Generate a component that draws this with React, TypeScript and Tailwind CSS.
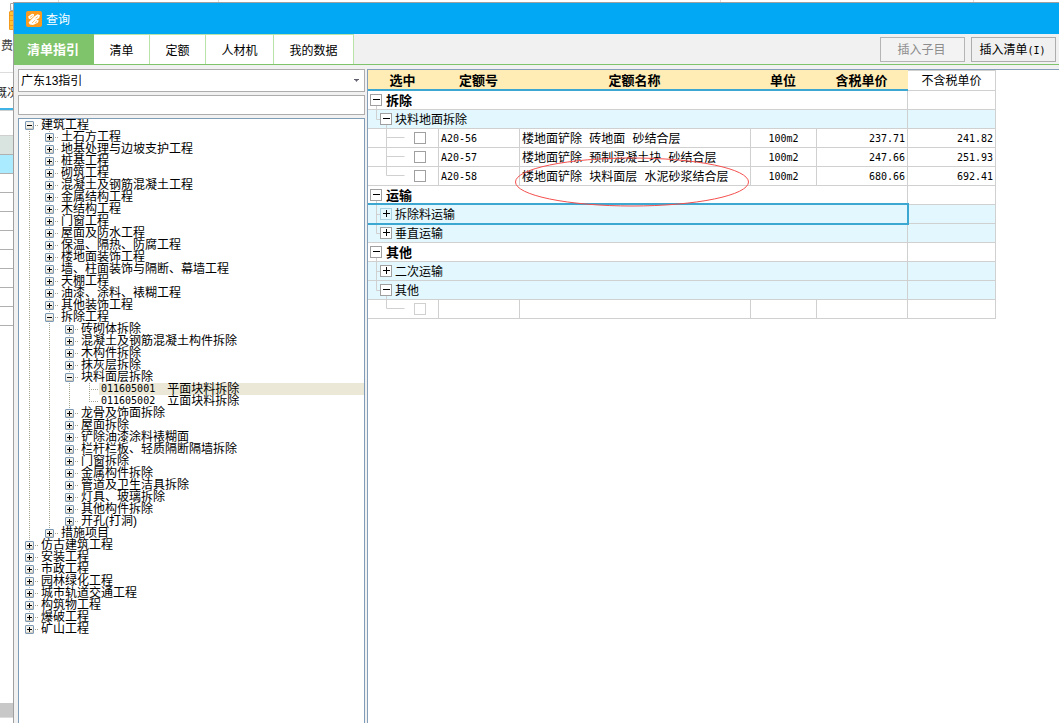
import React from 'react';

type TreeNode = { label: string; code?: string; open?: boolean; selected?: boolean; children?: TreeNode[] };

const leafs = (names: string[]): TreeNode[] => names.map((label) => ({ label, children: [] }));

const tree: TreeNode[] = [
  {
    label: '建筑工程',
    open: true,
    children: [
      ...leafs([
        '土石方工程',
        '地基处理与边坡支护工程',
        '桩基工程',
        '砌筑工程',
        '混凝土及钢筋混凝土工程',
        '金属结构工程',
        '木结构工程',
        '门窗工程',
        '屋面及防水工程',
        '保温、隔热、防腐工程',
        '楼地面装饰工程',
        '墙、柱面装饰与隔断、幕墙工程',
        '天棚工程',
        '油漆、涂料、裱糊工程',
        '其他装饰工程',
      ]),
      {
        label: '拆除工程',
        open: true,
        children: [
          ...leafs(['砖砌体拆除', '混凝土及钢筋混凝土构件拆除', '木构件拆除', '抹灰层拆除']),
          {
            label: '块料面层拆除',
            open: true,
            children: [
              { code: '011605001', label: '平面块料拆除', selected: true },
              { code: '011605002', label: '立面块料拆除' },
            ],
          },
          ...leafs([
            '龙骨及饰面拆除',
            '屋面拆除',
            '铲除油漆涂料裱糊面',
            '栏杆栏板、轻质隔断隔墙拆除',
            '门窗拆除',
            '金属构件拆除',
            '管道及卫生洁具拆除',
            '灯具、玻璃拆除',
            '其他构件拆除',
            '开孔(打洞)',
          ]),
        ],
      },
      ...leafs(['措施项目']),
    ],
  },
  ...leafs(['仿古建筑工程', '安装工程', '市政工程', '园林绿化工程', '城市轨道交通工程', '构筑物工程', '爆破工程', '矿山工程']),
];

const dots = { stroke: '#a5a391', strokeWidth: 1, strokeDasharray: '1 1' };

function TreeRow({ node, guides, first, last }: { node: TreeNode; guides: boolean[]; first: boolean; last: boolean }) {
  const top = first ? 6 : 0;
  return (
    <div className="flex h-3 items-stretch">
      {guides.map((on, i) => (
        <svg key={i} className="h-3 w-5 shrink-0" viewBox="0 0 20 12" aria-hidden="true">
          {on && <line x1="10.5" y1="0" x2="10.5" y2="12" {...dots} />}
        </svg>
      ))}
      {node.children ? (
        <button type="button" aria-label={(node.open ? '折叠' : '展开') + node.label} className="h-3 w-5 shrink-0">
          <svg className="block h-3 w-5" viewBox="0 0 20 12">
            <line x1="10.5" y1={top} x2="10.5" y2={last ? 6 : 12} {...dots} />
            <line x1="16" y1="6.5" x2="20" y2="6.5" {...dots} />
            <rect x="6.5" y="2.5" width="8" height="8" rx="0.5" fill="#f3f1ea" stroke="#7b99b5" />
            <path d="M7 9.5h7M13.5 7v3" stroke="#d2cdbf" fill="none" />
            <path d={node.open ? 'M8 6.5h5' : 'M8 6.5h5M10.5 4v5'} stroke="#000" fill="none" />
          </svg>
        </button>
      ) : (
        <svg className="h-3 w-5 shrink-0" viewBox="0 0 20 12" aria-hidden="true">
          <line x1="10.5" y1="0" x2="10.5" y2={last ? 7 : 12} {...dots} />
          <line x1="10" y1="6.5" x2="20" y2="6.5" {...dots} />
        </svg>
      )}
      <div className={'flex flex-1 items-center whitespace-nowrap pl-0.5 ' + (node.selected ? 'bg-[#ebe8d7]' : '')}>
        {node.code && <span className={'mr-3 ' + mono}>{node.code}</span>}
        <span>{node.label}</span>
      </div>
    </div>
  );
}

function TreeLevel({ nodes, guides }: { nodes: TreeNode[]; guides: boolean[] }) {
  return (
    <ul role={guides.length ? 'group' : 'tree'}>
      {nodes.map((node, i) => {
        const last = i === nodes.length - 1;
        return (
          <li key={node.label} role="treeitem" aria-selected={!!node.selected}>
            <TreeRow node={node} guides={guides} first={i === 0 && guides.length === 0} last={last} />
            {node.open && node.children && <TreeLevel nodes={node.children} guides={[...guides, !last]} />}
          </li>
        );
      })}
    </ul>
  );
}

type Row =
  | { kind: 'group'; label: string }
  | { kind: 'sub'; label: string; open: boolean; last: boolean; current?: boolean }
  | { kind: 'item'; code: string; name: string; unit: string; taxed: string; untaxed: string; last: boolean; disabled?: boolean };

const rows: Row[] = [
  { kind: 'group', label: '拆除' },
  { kind: 'sub', label: '块料地面拆除', open: true, last: true },
  { kind: 'item', code: 'A20-56', name: '楼地面铲除 砖地面 砂结合层', unit: '100m2', taxed: '237.71', untaxed: '241.82', last: false },
  { kind: 'item', code: 'A20-57', name: '楼地面铲除 预制混凝土块 砂结合层', unit: '100m2', taxed: '247.66', untaxed: '251.93', last: false },
  { kind: 'item', code: 'A20-58', name: '楼地面铲除 块料面层 水泥砂浆结合层', unit: '100m2', taxed: '680.66', untaxed: '692.41', last: true },
  { kind: 'group', label: '运输' },
  { kind: 'sub', label: '拆除料运输', open: false, last: false, current: true },
  { kind: 'sub', label: '垂直运输', open: false, last: true },
  { kind: 'group', label: '其他' },
  { kind: 'sub', label: '二次运输', open: false, last: false },
  { kind: 'sub', label: '其他', open: true, last: true },
  { kind: 'item', code: '', name: '', unit: '', taxed: '', untaxed: '', last: true, disabled: true },
];

const mono = "font-['DejaVu_Sans_Mono','Liberation_Mono',monospace] text-[10px] leading-3";
const cell = 'h-[19px] border-r border-b border-[#d0d0d0]';
const textCell = cell + ' px-0.5 pt-0.5 pb-0';

function GridRow({ row }: { row: Row }) {
  if (row.kind === 'group') {
    return (
      <tr>
        <td colSpan={5} className={cell + ' p-0'}>
          <div className="flex h-[18px] items-center">
            <button type="button" aria-label={'折叠' + row.label} className="h-[18px] w-[18px] shrink-0">
              <svg className="block h-[18px] w-[18px]" viewBox="0 0 18 18">
                <path d="M8.5 15v3" stroke="#d0d0d0" />
                <rect x="2.5" y="3.5" width="11" height="11" fill="#fff" stroke="#a0a0a0" />
                <path d="M5 8.5h7" stroke="#000" />
              </svg>
            </button>
            <span className="pt-0.5 text-[13px] font-bold">{row.label}</span>
          </div>
        </td>
        <td className={cell + ' p-0'} />
      </tr>
    );
  }
  if (row.kind === 'sub') {
    return (
      <tr className="bg-[#e2f7fe]">
        <td colSpan={5} className={cell + ' relative p-0'}>
          <div className="flex h-[18px] items-center">
            <button type="button" aria-label={(row.open ? '折叠' : '展开') + row.label} className="h-[18px] w-[27px] shrink-0">
              <svg className="block h-[18px] w-[27px]" viewBox="0 0 27 18" fill="none">
                <path d={row.last ? 'M8.5 0v9.5h4' : 'M8.5 0v18M8.5 9.5h4'} stroke="#d0d0d0" />
                {row.open && <path d="M18.5 15v3" stroke="#d0d0d0" />}
                <rect x="12.5" y="3.5" width="11" height="11" fill={row.current ? '#e2f7fe' : '#fff'} stroke={row.current ? '#a9d3e2' : '#a0a0a0'} />
                <path d={row.open ? 'M15 8.5h7' : 'M15 8.5h7M18.5 5v7'} stroke="#000" />
              </svg>
            </button>
            <span className="pt-0.5">{row.label}</span>
          </div>
          {row.current && (
            <div className="pointer-events-none absolute -top-0.5 -right-0.5 -bottom-0.5 left-0 z-10 border-2 border-l-0 border-[#3ca8d2]" />
          )}
        </td>
        <td className={cell + ' p-0'} />
      </tr>
    );
  }
  return (
    <tr>
      <td className={cell + ' p-0'}>
        <div className="flex h-[18px] items-center">
          <svg className="h-[18px] w-[46px] shrink-0" viewBox="0 0 46 18" fill="none" aria-hidden="true">
            <path d={row.last ? 'M18.5 0v8.5h18' : 'M18.5 0v18M18.5 8.5h18'} stroke="#d0d0d0" />
          </svg>
          <input
            type="checkbox"
            aria-label={'选中 ' + row.code}
            disabled={row.disabled}
            className="block h-3 w-3 appearance-none border border-[#a0a0a0] bg-white checked:bg-[#3ca8d2] disabled:border-[#d0d0d0]"
          />
        </div>
      </td>
      <td className={textCell + ' ' + mono}>{row.code}</td>
      <td className={cell + " px-0.5 pt-1 pb-0 font-['Liberation_Mono','Noto_Sans_CJK_SC',monospace] whitespace-nowrap"}>{row.name}</td>
      <td className={textCell + ' text-center ' + mono}>{row.unit}</td>
      <td className={textCell + ' text-right ' + mono}>{row.taxed}</td>
      <td className={textCell + ' text-right ' + mono}>{row.untaxed}</td>
    </tr>
  );
}

function AppLogo() {
  return (
    <svg className="h-4 w-4" viewBox="0 0 16 16" fill="none" aria-hidden="true">
      <rect width="16" height="16" rx="2" fill="#fb9a1c" />
      <path d="M2.200 5.400 6 2.800 8.200 3.200 7.600 5.400 4.400 8.200 2.600 7.600Z" fill="#fff" />
      <path d="M8.600 5.200 11.600 3.200 14 4.200 13.200 7 10.400 8.800 12.800 9.600 11.800 11.800 7 14 3.800 13.600 2.600 11.400 5 8.800Z" fill="#fff" />
      <path d="M4 6.400 6.600 4.600M9.400 7.200l2.400-1.600M6 12l3.200-3M9 11.600l2-1" stroke="#fbab45" strokeWidth="0.8" />
    </svg>
  );
}

function BackgroundStrip() {
  return (
    <div className="flex w-[13px] shrink-0 flex-col overflow-hidden whitespace-nowrap bg-white">
      <svg className="mt-[3px] h-7 w-[13px] shrink-0" viewBox="0 0 13 28" aria-hidden="true">
        <path d="M10.5 0.5v7H13M10.5 0.5H13" stroke="#a8a8a8" fill="#e8e8e8" />
        <path d="M9 9h4v18H10l-1-1z" fill="#ffc22e" />
        <path d="M9.5 8.5v18M10 8.5h3M10 12.5h3M10 17.5h3M10 22.5h3M10 26.5h3" stroke="#f29a1e" fill="none" />
      </svg>
      <div className="flex h-[42px] shrink-0 items-center border-b border-[#dcdcdc] pb-3 pl-px text-[#444]">费</div>
      <div className="-ml-[5px] flex h-[37px] shrink-0 items-center border-b-2 border-[#3fb3e6] pt-1 text-[#222]">概况</div>
      <div className="h-[26px] shrink-0 border-y border-[#cfcfcf]" />
      <div className="h-[19px] shrink-0 border-b border-[#b0b0b0] bg-[#d9e3df]" />
      <div className="h-[19px] shrink-0 border-b border-[#b0b0b0] bg-[#abebff]" />
      {Array.from({ length: 8 }, (_, i) => (
        <div key={i} className="h-[19px] shrink-0 border-b border-[#b0b0b0]" />
      ))}
      <div className="flex-1" />
      <div className="mb-[5px] h-[15px] shrink-0 border-b border-[#dcdcdc] bg-[#c8c8c8]" />
    </div>
  );
}

const tabs = [
  { label: '清单', width: 'w-14' },
  { label: '定额', width: 'w-14' },
  { label: '人材机', width: 'w-[68px]' },
  { label: '我的数据', width: 'w-20' },
];

export default function App() {
  return (
    <div className="flex h-screen overflow-hidden bg-white font-['Liberation_Sans','Noto_Sans_CJK_SC',sans-serif] text-xs leading-3 text-black">
      <BackgroundStrip />
      <div className="flex min-w-0 flex-1 flex-col">
        <div className="flex h-0.5 shrink-0">
          <div className="w-[46px] border-r border-[#dcdcdc]" />
          <div className="w-40 border-r border-[#dcdcdc]" />
          <div className="w-[502px] border-r border-[#dcdcdc]" />
          <div className="w-[253px] border-r border-[#dcdcdc]" />
        </div>
        <div className="flex min-h-0 flex-1 flex-col border-t border-l border-[#a0a0a0] bg-[#f1f1f1]">
          <header className="flex h-[31px] shrink-0 items-center gap-1 bg-[#02a8f3] pl-3 text-white">
            <AppLogo />
            <h1 className="pt-0.5 text-xs leading-3">查询</h1>
          </header>

          <div className="flex h-[31px] shrink-0 items-stretch border-b border-[#7fc36a]">
            <nav role="tablist" className="flex">
              <button type="button" role="tab" aria-selected="true" className="w-20 bg-[#7fc36a] pt-0.5 pr-0.5 text-[13px] font-bold text-white">
                清单指引
              </button>
              {tabs.map((t) => (
                <button
                  key={t.label}
                  type="button"
                  role="tab"
                  aria-selected="false"
                  className={'border-t border-r border-[#b9e3a8] bg-white pt-0.5 ' + t.width}
                >
                  {t.label}
                </button>
              ))}
            </nav>
            <div className="ml-auto flex items-center gap-1.5 pr-[3px]">
              <button type="button" disabled className="h-[25px] w-[85px] border border-[#b5b5b5] bg-[#f3f3f3] pt-0.5 pr-0.5 text-[#8c8c8c]">
                插入子目
              </button>
              <button type="button" className="h-[25px] w-[85px] border border-[#adadad] bg-[#f0f0f0] pt-0.5 pr-0.5">
                插入清单<span className={mono}>(I)</span>
              </button>
            </div>
          </div>

          <main className="flex min-h-0 flex-1 gap-0.5 pt-1 pl-1">
            <aside className="flex w-[347px] shrink-0 flex-col gap-[3px]">
              <div className="relative shrink-0">
                <select aria-label="指引" className="block h-[23px] w-full appearance-none border border-[#adadad] bg-white pl-0.5 text-xs leading-4">
                  <option>广东13指引</option>
                </select>
                <svg className="pointer-events-none absolute top-2.5 right-1.5 h-[3px] w-[5px]" viewBox="0 0 5 3" aria-hidden="true">
                  <path d="M0 0h5v1H4L2.5 3 1 1H0z" fill="#606070" />
                </svg>
              </div>
              <input type="text" aria-label="搜索" className="block h-5 w-full shrink-0 border border-[#adadad] bg-white px-1" />
              <div className="min-h-0 flex-1 overflow-hidden border border-b-0 border-[#7f9db9] bg-white">
                <TreeLevel nodes={tree} guides={[]} />
              </div>
            </aside>

            <section className="min-w-0 flex-1 overflow-hidden border-t border-l border-[#869fb8] bg-white">
              <div className="relative">
                <table className="w-[628px] table-fixed border-separate border-spacing-0">
                  <colgroup>
                    <col className="w-[71px]" />
                    <col className="w-[81px]" />
                    <col className="w-[231px]" />
                    <col className="w-[66px]" />
                    <col className="w-[91px]" />
                    <col className="w-[88px]" />
                  </colgroup>
                  <thead>
                    <tr className="text-[13px]">
                      {['选中', '定额号', '定额名称', '单位', '含税单价'].map((h) => (
                        <th key={h} scope="col" className="h-[21px] border-b-2 border-[#3ca8d2] bg-[#ffedb5] pt-0.5 pr-0.5 pb-0 pl-0 font-bold">
                          {h}
                        </th>
                      ))}
                      <th scope="col" className="h-[21px] border-t border-r border-b border-[#d0d0d0] p-0 text-xs leading-3 font-normal">
                        不含税单价
                      </th>
                    </tr>
                  </thead>
                  <tbody>
                    {rows.map((row, i) => (
                      <GridRow key={i} row={row} />
                    ))}
                  </tbody>
                </table>
                <svg className="pointer-events-none absolute top-[86px] left-[146px] z-20 h-[52px] w-[236px]" viewBox="0 0 236 52" fill="none" aria-hidden="true">
                  <ellipse cx="118" cy="26" rx="116.5" ry="24" stroke="#f4504e" strokeWidth="1" />
                </svg>
              </div>
            </section>
          </main>
        </div>
      </div>
    </div>
  );
}
